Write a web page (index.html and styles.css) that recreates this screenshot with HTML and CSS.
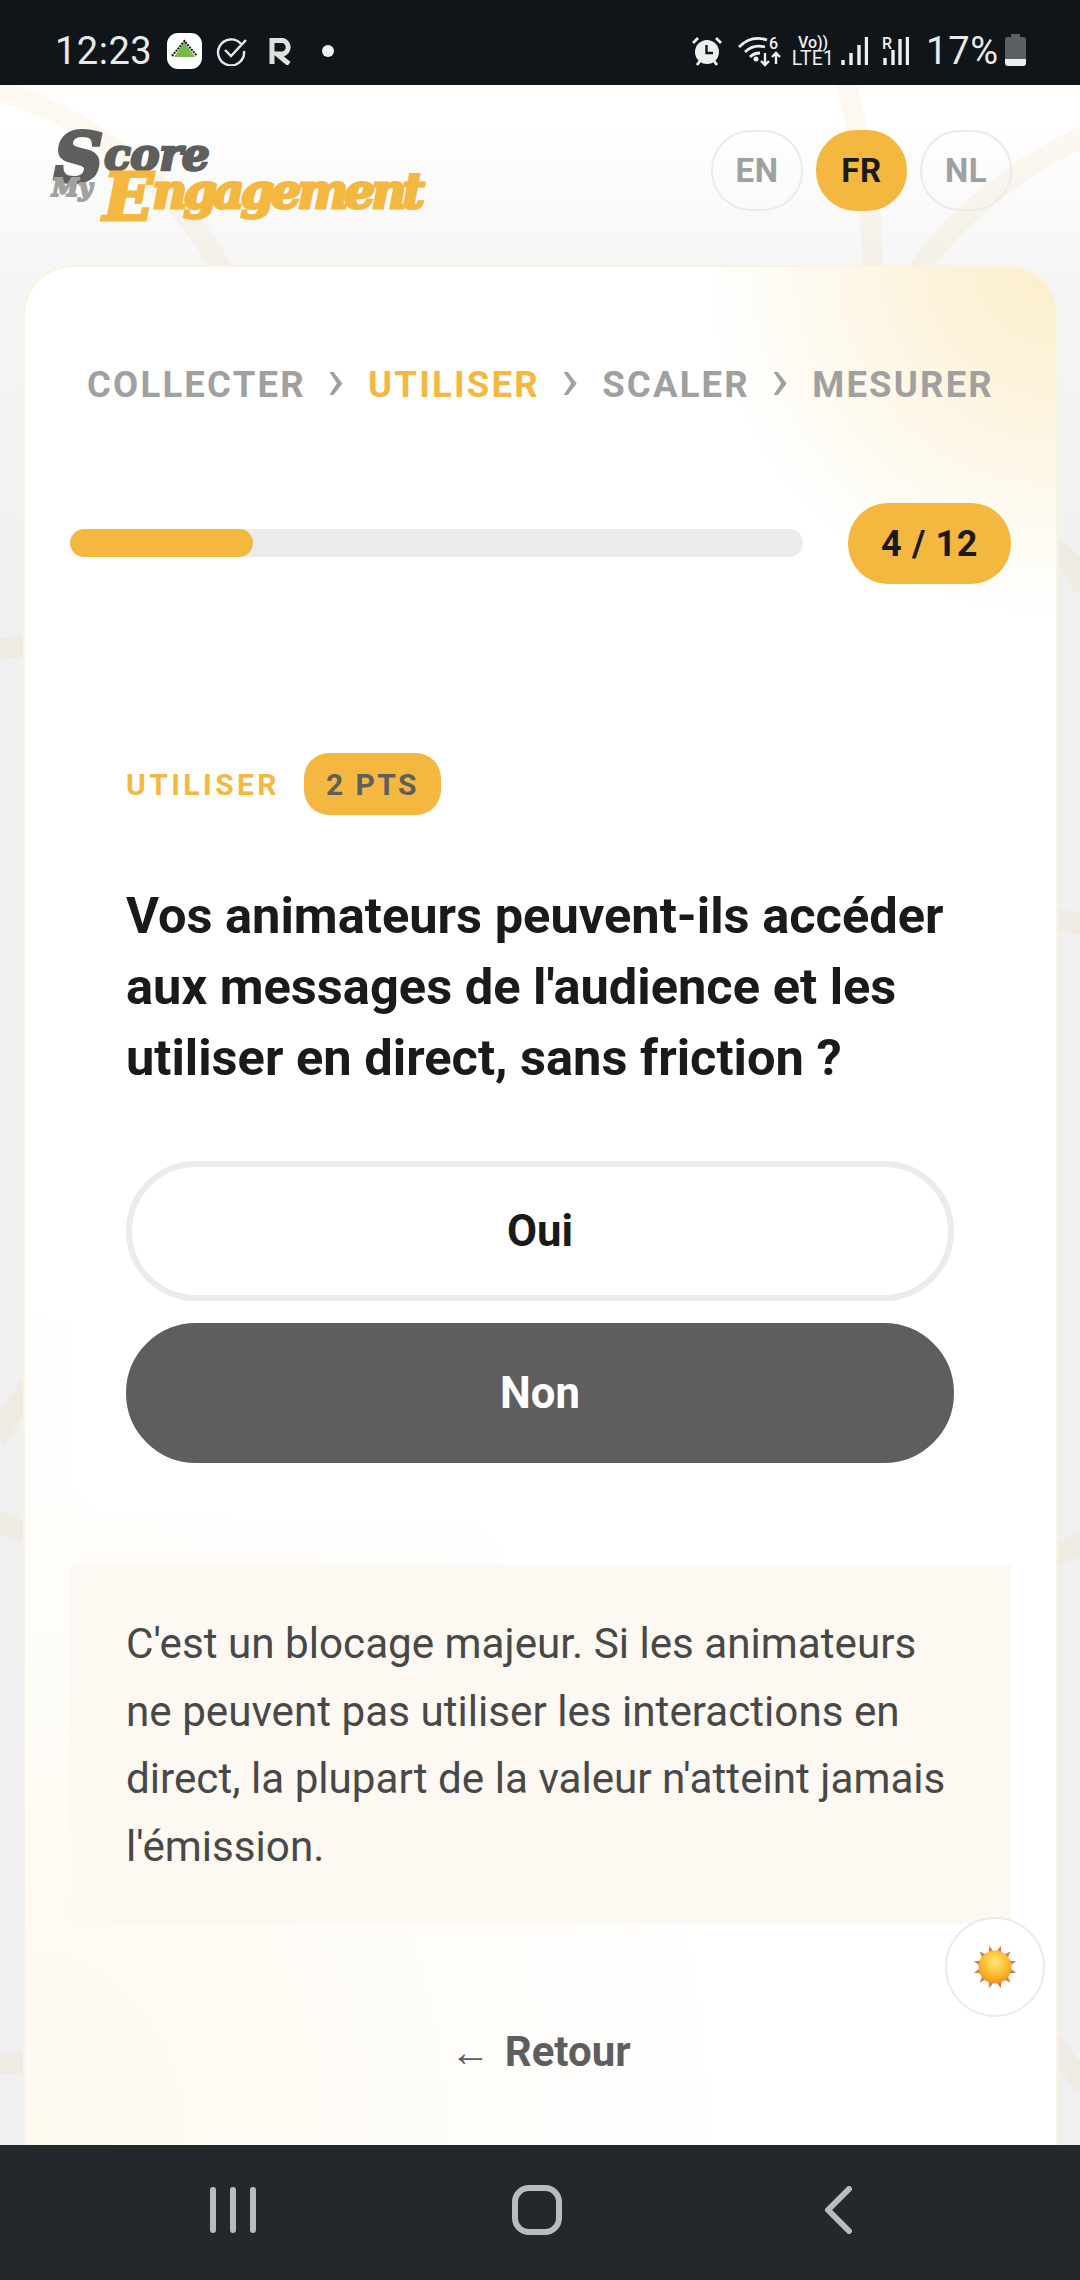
FILE: index.html
```html
<!DOCTYPE html>
<html>
<head>
  <meta charset="utf-8">
  <link rel="stylesheet" href="styles.css">
</head>
<body>
  <div class="phone">
    <div class="statusbar">
      <div class="status-left">
        <span class="clock">12:23</span>
        <svg class="ic-store" width="35" height="36" viewBox="0 0 35 36">
          <rect x="0" y="0" width="35" height="36" rx="11" fill="#fff"/>
          <path d="M17.500 9 L28 24 H7 Z" fill="#7ab648"/>
          <path d="M5 23 L17.500 8 L30 23" fill="none" stroke="#111" stroke-width="2" stroke-dasharray="2 1"/>
        </svg>
        <svg class="ic-check" width="32" height="30" viewBox="0 0 32 30">
          <path d="M25 8 A13 13 0 1 0 28 15" fill="none" stroke="#e8eaea" stroke-width="2.400"/>
          <path d="M9 14 L15 20 L30 4" fill="none" stroke="#e8eaea" stroke-width="2.400"/>
        </svg>
        <svg class="ic-r" width="24" height="28" viewBox="0 0 24 28">
          <path d="M3 1 V27 M3 3.500 H14 A7 7 0 0 1 14 17 H8 L20 27" fill="none" stroke="#dfe1e1" stroke-width="5"/>
        </svg>
        <span class="dot"></span>
      </div>
      <div class="status-right">
        <svg class="ic-alarm" width="30" height="30" viewBox="0 0 30 30">
          <circle cx="15" cy="16" r="12" fill="#eef0f0"/>
          <path d="M14.500 9 V17 H21" fill="none" stroke="#0f1519" stroke-width="2.400"/>
          <path d="M1 7 L6 2 M29 7 L24 2 M5 29 L8 25 M25 29 L22 25" stroke="#eef0f0" stroke-width="2.800"/>
        </svg>
        <div class="wifi">
          <svg width="44" height="31" viewBox="0 0 44 31">
            <path d="M1 11 C10 2 20 1 29 4 M7 16 C13 10 20 9 27 11 M12 21 C15 18 19 17 22 17" fill="none" stroke="#eef0f0" stroke-width="2.800"/>
            <circle cx="18" cy="23" r="2.500" fill="#eef0f0"/>
            <path d="M27 17 V29 M23 25 L27 29 L31 25 M38 28 V17 M34 21 L38 17 L42 21" fill="none" stroke="#eef0f0" stroke-width="2.400"/>
          </svg>
          <span class="wifi-six">6</span>
        </div>
        <div class="volte"><span class="volte-top">Vo))</span><span class="volte-bottom">LTE1</span></div>
        <svg class="ic-signal" width="27" height="29" viewBox="0 0 27 29">
          <path d="M2 23 V28 M10 16 V28 M18 8 V28 M25.500 0 V28" stroke="#eef0f0" stroke-width="3.400"/>
        </svg>
        <div class="signal-roam">
          <span class="roam">R</span>
          <svg width="27" height="29" viewBox="0 0 27 29">
            <path d="M3 21 V28 M11 13 V28 M18 2 V28 M25.500 0 V28" stroke="#eef0f0" stroke-width="3.400"/>
          </svg>
        </div>
        <span class="battery-text">17%</span>
        <svg class="battery" width="21" height="32" viewBox="0 0 21 32">
          <path d="M6 0 H15 V3 H18 Q21 3 21 6 V25 H0 V6 Q0 3 3 3 H6 Z" fill="#5c6063"/>
          <path d="M0 25 H21 V29 Q21 32 18 32 H3 Q0 32 0 29 Z" fill="#eef0f0"/>
        </svg>
      </div>
    </div>

    <div class="main">
      <svg class="bg-rays" width="1080" height="2060" viewBox="0 85 1080 2060">
        <path d="M-10 88 C70 110 170 170 225 275" />
        <path d="M843 70 C855 120 875 190 872 280" />
        <path d="M1090 133 C1020 165 960 210 915 275" />
        <path d="M-5 650 L30 645" />
        <path d="M-5 1440 L30 1385" />
        <path d="M-5 1520 L30 1535" />
        <path d="M-5 2064 L30 2062" />
        <path d="M1050 545 C1065 555 1075 565 1085 590" />
        <path d="M1050 918 L1085 925" />
        <path d="M1050 1558 L1085 1542" />
        <path d="M1050 2040 L1085 2085" />
      </svg>

      <div class="header">
        <div class="logo">
          <span class="logo-s">S</span>
          <span class="logo-score">core</span>
          <span class="logo-my">My</span>
          <span class="logo-engagement"><b class="logo-cap">E</b>ngagement</span>
        </div>
        <div class="langs">
          <span class="lang">EN</span>
          <span class="lang active">FR</span>
          <span class="lang">NL</span>
        </div>
      </div>

      <div class="card">
        <div class="steps">
          <span>COLLECTER</span>
          <i>›</i>
          <span class="current">UTILISER</span>
          <i>›</i>
          <span>SCALER</span>
          <i>›</i>
          <span>MESURER</span>
        </div>

        <div class="progress-row">
          <div class="progress"><div class="progress-fill" style="width: 25%"></div></div>
          <div class="count">4 / 12</div>
        </div>

        <div class="question">
          <div class="question-meta">
            <span class="pillar">UTILISER</span>
            <span class="points">2 PTS</span>
          </div>
          <h2>Vos animateurs peuvent-ils accéder aux messages de l'audience et les utiliser en direct, sans friction ?</h2>
          <button class="answer">Oui</button>
          <button class="answer selected">Non</button>
        </div>

        <div class="feedback">C'est un blocage majeur. Si les animateurs ne peuvent pas utiliser les interactions en direct, la plupart de la valeur n'atteint jamais l'émission.</div>

        <div class="back"><span class="back-arrow">←</span> Retour</div>
      </div>

      <div class="theme-toggle">
        <svg width="46" height="46" viewBox="0 0 46 46">
          <defs>
            <radialGradient id="sunfill" cx="50%" cy="36%" r="64%">
              <stop offset="0" stop-color="#ffe680"/>
              <stop offset="0.6" stop-color="#fbbd2c"/>
              <stop offset="1" stop-color="#ee9320"/>
            </radialGradient>
          </defs>
          <g fill="#cf7f4c">
            <path d="M23 1 L26 9 H20 Z" transform="rotate(15 23 23)"/>
            <path d="M23 1 L26 9 H20 Z" transform="rotate(45 23 23)"/>
            <path d="M23 1 L26 9 H20 Z" transform="rotate(75 23 23)"/>
            <path d="M23 1 L26 9 H20 Z" transform="rotate(105 23 23)"/>
            <path d="M23 1 L26 9 H20 Z" transform="rotate(135 23 23)"/>
            <path d="M23 1 L26 9 H20 Z" transform="rotate(165 23 23)"/>
            <path d="M23 1 L26 9 H20 Z" transform="rotate(195 23 23)"/>
            <path d="M23 1 L26 9 H20 Z" transform="rotate(225 23 23)"/>
            <path d="M23 1 L26 9 H20 Z" transform="rotate(255 23 23)"/>
            <path d="M23 1 L26 9 H20 Z" transform="rotate(285 23 23)"/>
            <path d="M23 1 L26 9 H20 Z" transform="rotate(315 23 23)"/>
            <path d="M23 1 L26 9 H20 Z" transform="rotate(345 23 23)"/>
          </g>
          <circle cx="23" cy="23" r="16.500" fill="url(#sunfill)"/>
        </svg>
      </div>
    </div>

    <div class="navbar">
      <svg class="nav-recent" width="46" height="46" viewBox="0 0 46 46">
        <path d="M3 3 V43 M23 3 V43 M43 3 V43" stroke="#b9bcbf" stroke-width="6" stroke-linecap="round"/>
      </svg>
      <svg class="nav-home" width="50" height="50" viewBox="0 0 50 50">
        <rect x="3" y="3" width="44" height="44" rx="14" fill="none" stroke="#b9bcbf" stroke-width="6"/>
      </svg>
      <svg class="nav-back" width="30" height="48" viewBox="0 0 30 48">
        <path d="M26 3 L5 24 L26 45" fill="none" stroke="#b9bcbf" stroke-width="6" stroke-linecap="round" stroke-linejoin="round"/>
      </svg>
    </div>
  </div>
</body>
</html>
```

FILE: styles.css
```css
* {
  box-sizing: border-box;
}

body {
  margin: 0;
  font-family: Roboto, "Liberation Sans", sans-serif;
  color: #1a1a1a;
}

.phone {
  width: 1080px;
  height: 2280px;
  display: flex;
  flex-direction: column;
  overflow: hidden;
}

/* status bar */
.statusbar {
  height: 85px;
  flex: none;
  background-color: #0f1519;
  color: #e8eaea;
  display: flex;
  justify-content: space-between;
  align-items: center;
  padding: 17px 54px 0 55px;
}

.status-left,
.status-right {
  display: flex;
  align-items: center;
}

.clock {
  font-size: 38px;
  letter-spacing: 0.5px;
  margin-right: 15px;
}

.ic-check {
  margin-left: 14px;
}

.ic-r {
  margin-left: 21px;
}

.dot {
  width: 12px;
  height: 12px;
  border-radius: 50%;
  background-color: #eef0f0;
  margin-left: 29px;
}

.wifi {
  position: relative;
  display: flex;
  margin-left: 16px;
}

.wifi-six {
  position: absolute;
  left: 31px;
  top: 0;
  font-size: 16px;
  font-weight: 500;
  line-height: 16px;
  color: #eef0f0;
}

.volte {
  display: flex;
  flex-direction: column;
  align-items: center;
  margin-left: 11px;
  font-weight: 400;
  color: #eef0f0;
  width: 40px;
}

.volte-top {
  font-size: 16px;
  font-weight: 500;
  line-height: 15px;
}

.volte-bottom {
  font-size: 19.500px;
  line-height: 18px;
  letter-spacing: 0.2px;
}

.ic-signal {
  margin-left: 8px;
}

.signal-roam {
  position: relative;
  margin-left: 14px;
  display: flex;
}

.roam {
  position: absolute;
  left: 0;
  top: -3px;
  font-size: 16px;
  font-weight: 500;
  color: #eef0f0;
}

.battery-text {
  font-size: 38px;
  margin-left: 17px;
  letter-spacing: 0.8px;
}

.battery {
  margin-left: 6px;
  margin-top: -2px;
}

/* page */
.main {
  position: relative;
  flex: 1;
  min-height: 0;
  display: flex;
  flex-direction: column;
  overflow: hidden;
  background: linear-gradient(180deg, #ffffff 0px, #ffffff 40px, #f6f6f6 180px, #f0f0f0 500px);
}

.bg-rays {
  position: absolute;
  left: 0;
  top: 0;
}

.bg-rays path {
  fill: none;
  stroke: rgba(244, 183, 64, 0.08);
  stroke-width: 21;
}

.header {
  position: relative;
  height: 180px;
  flex: none;
  display: flex;
  justify-content: space-between;
  align-items: flex-start;
  padding: 45px 68px 0 50px;
}

.logo {
  position: relative;
  width: 380px;
  height: 100px;
  font-family: "DejaVu Serif", serif;
  font-style: italic;
  font-weight: 700;
  line-height: 1;
  color: #5e5e5e;
}

.logo > span {
  position: absolute;
  white-space: nowrap;
}

.logo-s {
  left: 4px;
  top: -7px;
  font-size: 68px;
  -webkit-text-stroke: 4px #5e5e5e;
}

.logo-score {
  left: 54px;
  top: 3px;
  font-size: 44px;
  letter-spacing: -0.500px;
  -webkit-text-stroke: 2.500px #5e5e5e;
}

.logo-my {
  left: 2px;
  top: 46px;
  font-size: 24px;
  letter-spacing: 0;
  color: #a0a0a0;
  -webkit-text-stroke: 2px #a0a0a0;
}

.logo-engagement {
  left: 53px;
  top: 34px;
  font-size: 48px;
  letter-spacing: -3.700px;
  color: #f4b740;
  -webkit-text-stroke: 3px #f4b740;
}

.logo-cap {
  font-size: 66px;
  letter-spacing: -1px;
  vertical-align: -12px;
}

.langs {
  display: flex;
  gap: 13px;
}

.lang {
  width: 92px;
  height: 81px;
  display: flex;
  align-items: center;
  justify-content: center;
  border: 2px solid #ebebeb;
  border-radius: 40px;
  font-size: 33px;
  font-weight: 700;
  letter-spacing: 0.5px;
  color: #a0a0a0;
}

.lang.active {
  width: 91px;
  border-color: #f4b740;
  background-color: #f4b740;
  color: #1a1a1a;
}

/* card */
.card {
  position: relative;
  flex: 1;
  margin: 0 22px 0 23px;
  border: 2px solid #fbf3e1;
  border-bottom: none;
  border-radius: 50px 50px 0 0;
  padding: 97px 45px 0;
  background:
    radial-gradient(circle at 100% 0%, #fbeecb 0, #fcf3dc 120px, rgba(255, 255, 255, 0) 350px),
    radial-gradient(ellipse 700px 850px at 0% 100%, #fef9ef 0, rgba(255, 255, 255, 0) 100%),
    #ffffff;
}

.steps {
  display: flex;
  justify-content: space-between;
  align-items: center;
  height: 40px;
  padding: 0 17px;
  font-size: 36.500px;
  font-weight: 700;
  letter-spacing: 2.200px;
  color: #a0a0a0;
}

.steps i {
  font-style: normal;
  font-weight: 400;
  font-size: 60px;
  line-height: 40px;
  margin-top: -10px;
}

.steps .current {
  color: #f4b740;
}

.progress-row {
  display: flex;
  align-items: center;
  gap: 45px;
  margin-top: 99px;
}

.progress {
  flex: 1;
  height: 28px;
  margin-top: -2px;
  border-radius: 14px;
  background-color: #ebebeb;
  overflow: hidden;
}

.progress-fill {
  height: 100%;
  border-radius: 14px;
  background-color: #f4b740;
}

.count {
  width: 163px;
  height: 81px;
  display: flex;
  align-items: center;
  justify-content: center;
  border-radius: 40px;
  background-color: #f4b740;
  font-size: 36px;
  font-weight: 700;
  letter-spacing: 0.6px;
}

.question {
  margin-top: 113px;
  padding: 56px 57px 56px 56px;
  border-radius: 50px;
  background-color: #ffffff;
}

.question-meta {
  display: flex;
  align-items: center;
  gap: 24px;
}

.pillar {
  font-size: 30px;
  font-weight: 700;
  letter-spacing: 3.400px;
  color: #f4b740;
}

.points {
  width: 137px;
  height: 62px;
  display: flex;
  align-items: center;
  justify-content: center;
  border-radius: 25px;
  background-color: #f4b740;
  font-size: 30px;
  font-weight: 700;
  letter-spacing: 2.400px;
  color: #5e5e5e;
}

h2 {
  margin: 65px 0 68px;
  font-size: 50.600px;
  font-weight: 700;
  line-height: 71px;
  color: #1a1a1a;
}

.answer {
  display: block;
  width: 100%;
  height: 140px;
  margin: 0 0 22px;
  border: 6px solid #ebebeb;
  border-radius: 70px;
  background-color: #ffffff;
  font-family: inherit;
  font-size: 43.600px;
  font-weight: 700;
  color: #1a1a1a;
}

.answer.selected {
  margin-bottom: 0;
  border-color: #5e5e5e;
  background-color: #5e5e5e;
  color: #ffffff;
}

.feedback {
  margin-top: 46px;
  padding: 45px 56px 44px;
  background-color: #fdf9f2;
  font-size: 42.200px;
  line-height: 67.500px;
  color: #484848;
}

.back {
  margin-top: 103px;
  text-align: center;
  font-size: 42px;
  font-weight: 700;
  line-height: 50px;
  color: #5e5e5e;
}

.back-arrow {
  font-family: "Liberation Sans", sans-serif;
  font-weight: 700;
  font-size: 40px;
  margin-right: 4px;
}

.theme-toggle {
  position: absolute;
  left: 945px;
  top: 1832px;
  width: 100px;
  height: 100px;
  display: flex;
  align-items: center;
  justify-content: center;
  border: 2px solid #ebebeb;
  border-radius: 50%;
  background-color: #ffffff;
}

/* android nav */
.navbar {
  height: 135px;
  flex: none;
  background-color: #24282c;
  display: flex;
  align-items: center;
  padding: 0 0 5px 210px;
}

.nav-home {
  margin-left: 256px;
}

.nav-back {
  margin-left: 261px;
}
```
